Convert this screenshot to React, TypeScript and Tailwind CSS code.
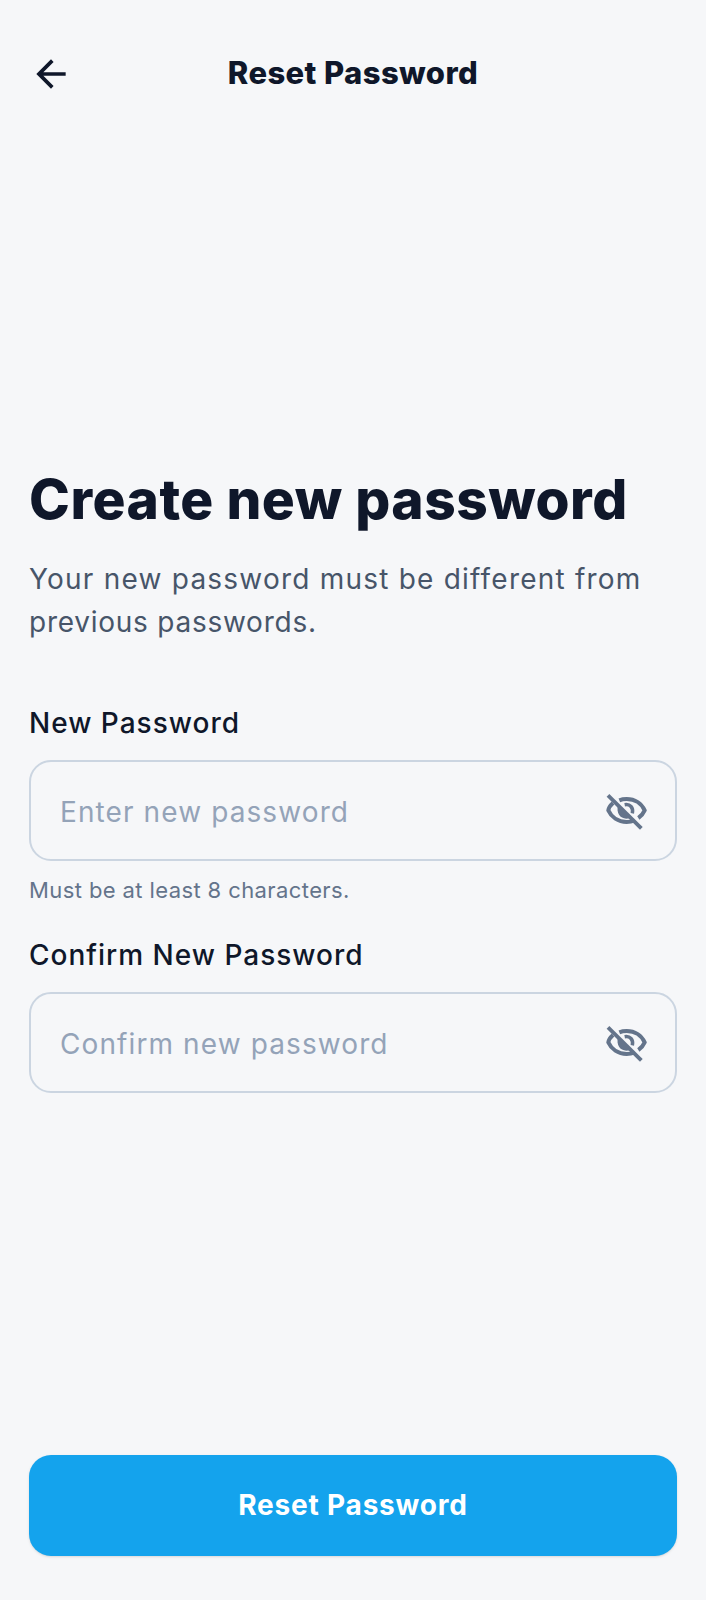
import { MdArrowBack } from "react-icons/md";

function EyeOff() {
  return (
    <svg viewBox="0 0 150 138" className="h-[46px] w-[50px] shrink-0 text-[#64748b]" fill="none" stroke="currentColor" strokeWidth="12">
      <path d="M33 45C25 52 20 60 19 67C28 87 48 102 74 102C83 102 91 100 98 97" />
      <path d="M52 37C59 34 66 33 74 33C99 33 119 47 128 67C124 76 118 84 109 90" />
      <path d="M48 52C42 75 54 92 73 92C81 92 86 90 89 88Z" fill="currentColor" stroke="none" />
      <path d="M68 50C84 47 95 59 91 76" strokeWidth="10.5" />
      <path d="M18 22L118 121" strokeWidth="11.5" />
    </svg>
  );
}

function Field({ label, placeholder }: { label: string; placeholder: string }) {
  return (
    <label className="flex flex-col">
      <span className="h-10 text-[28px] leading-[39px] font-medium tracking-[1px] text-[#0f172a]">{label}</span>
      <span className="mt-4 flex h-[101px] items-center rounded-[22px] border-2 border-[#cbd5e1] pr-[23px] pl-[29px]">
        <input
          type="password"
          placeholder={placeholder}
          className="min-w-0 flex-1 bg-transparent pt-0.5 text-[28px] tracking-[1.1px] outline-none placeholder:text-[#94a3b8]"
        />
        <EyeOff />
      </span>
    </label>
  );
}

export default function App() {
  return (
    <div className="flex h-[1600px] w-full flex-col bg-[#f6f7f9] px-[29px] font-[Inter,sans-serif] text-[#0f172a]">
      <header className="mt-[50px] grid h-11 grid-cols-[44px_1fr_44px] items-center">
        <MdArrowBack className="size-11" />
        <h1 className="pb-px text-center text-[31px] font-extrabold tracking-[0.4px]">Reset Password</h1>
      </header>
      <main className="mt-[369px] flex flex-col">
        <h2 className="text-[55px] leading-[72px] font-extrabold tracking-[0.5px] whitespace-nowrap">Create new password</h2>
        <p className="mt-[23px] text-[28px] leading-[43px] tracking-[1.22px] whitespace-nowrap text-[#475569]">
          Your new password must be different from
          <br />
          <span className="tracking-[0.75px]">previous passwords.</span>
        </p>
        <div className="mt-[60px]">
          <Field label="New Password" placeholder="Enter new password" />
          <p className="mt-[15px] mb-8 h-7 text-[22px] leading-7 tracking-[0.4px] text-[#64748b]">
            Must be at least 8 characters.
          </p>
          <Field label="Confirm New Password" placeholder="Confirm new password" />
        </div>
      </main>
      <button className="mt-auto mb-11 h-[101px] shrink-0 rounded-[22px] bg-[#14a3ed] pb-0.5 text-[28px] font-bold tracking-[0.8px] text-white shadow-sm">
        Reset Password
      </button>
    </div>
  );
}
